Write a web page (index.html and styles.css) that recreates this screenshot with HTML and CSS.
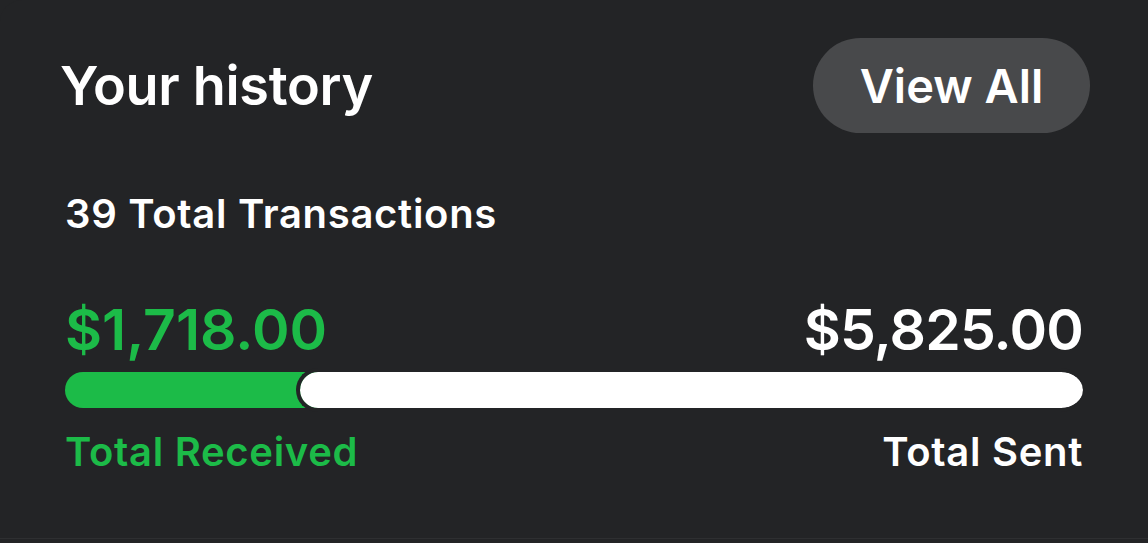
FILE: index.html
```html
<!DOCTYPE html>
<html>
<head>
<meta charset="utf-8">
<link rel="stylesheet" href="styles.css">
</head>
<body>
<div class="card">
  <div class="header">
    <h1 class="title">Your history</h1>
    <button class="view-all">View All</button>
  </div>
  <div class="body">
    <div class="count">39 Total Transactions</div>
    <div class="amounts">
      <span class="received">$1,718.00</span>
      <span class="sent">$5,825.00</span>
    </div>
    <div class="bar">
      <div class="bar-received" style="width: 24.9%"></div>
      <div class="bar-sent"></div>
    </div>
    <div class="labels">
      <span class="received-label">Total Received</span>
      <span class="sent-label">Total Sent</span>
    </div>
  </div>
</div>
</body>
</html>
```

FILE: styles.css
```css
* { box-sizing: border-box; }
html, body {
  margin: 0;
  padding: 0;
  background: #232426;
}
body {
  width: 1148px;
  height: 543px;
  overflow: hidden;
  font-family: Inter, "Liberation Sans", sans-serif;
  color: #ffffff;
}
.card {
  background: #232426;
  height: 539px;
  border-radius: 22px 0 0 0;
  border-bottom: 1px solid #2e2f31;
  padding: 38px 58px 0 60px;
}
.header {
  display: flex;
  justify-content: space-between;
  align-items: center;
}
.title {
  margin: 0;
  font-size: 54px;
  font-weight: 600;
  letter-spacing: -0.3px;
  line-height: 1;
}
.view-all {
  height: 95px;
  width: 277px;
  border: none;
  border-radius: 48px;
  background: #48494b;
  color: #ffffff;
  font-family: inherit;
  font-size: 47px;
  font-weight: 600;
  padding: 0;
}
.body {
  padding: 0 7px 0 5px;
}
.count {
  margin-top: 61px;
  font-size: 40px;
  font-weight: 600;
  line-height: 1;
  letter-spacing: 0.7px;
}
.amounts {
  margin-top: 67px;
  display: flex;
  justify-content: space-between;
  font-size: 57px;
  font-weight: 600;
  line-height: 1;
}
.sent { letter-spacing: -0.8px; }
.received { color: #1cbb48; }
.bar {
  margin-top: 14px;
  height: 36px;
  display: flex;
}
.bar-received {
  background: #1cbb48;
  border-radius: 18px 0 0 18px;
  margin-right: -22px;
}
.bar-sent {
  flex: 1;
  background: #ffffff;
  border-radius: 22px;
  height: 44px;
  margin-top: -4px;
  border: 4px solid #232426;
  border-right: none;
  background-clip: padding-box;
}
.labels {
  margin-top: 24px;
  display: flex;
  justify-content: space-between;
  font-size: 40px;
  font-weight: 600;
  line-height: 1;
  letter-spacing: 0.7px;
}
.received-label { color: #1cbb48; }
```
